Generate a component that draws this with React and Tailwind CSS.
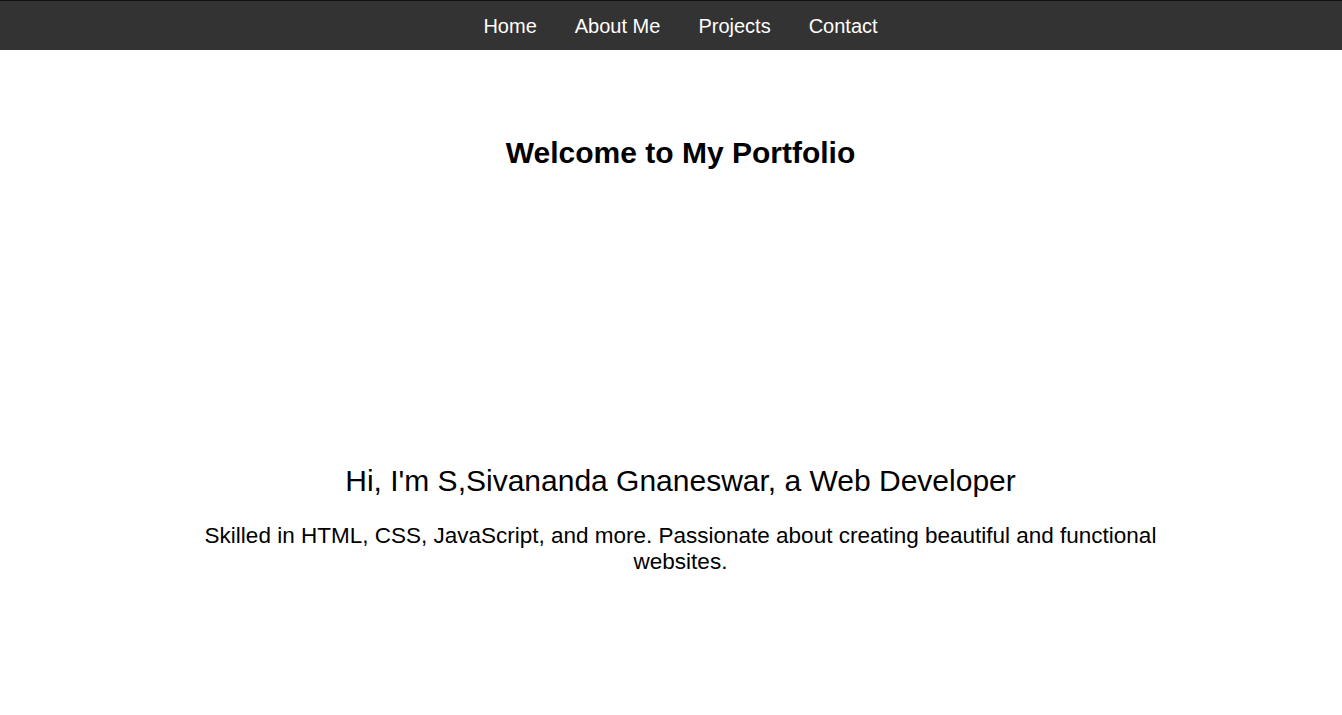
export default function App() {
  return (
    <div className="min-h-screen bg-white text-black" style={{ fontFamily: '"Liberation Sans", Arial, sans-serif' }}>
      <nav className="h-[50px] bg-[#333333] border-t border-[#111111] flex items-center justify-center">
        <ul className="flex pl-[19px]">
          {["Home", "About Me", "Projects", "Contact"].map((t) => (
            <li key={t} className="px-[19px] text-[20px] text-white">
              <a href="#">{t}</a>
            </li>
          ))}
        </ul>
      </nav>
      <header className="pt-[80px] pl-[19px] text-center">
        <h1 className="text-[30px] font-bold">Welcome to My Portfolio</h1>
      </header>
      <section className="pt-[283px] pl-[19px] flex flex-col items-center text-center">
        <h2 className="text-[30px]">Hi, I'm S,Sivananda Gnaneswar, a Web Developer</h2>
        <p className="mt-[20px] max-w-[960px] text-[22.5px] leading-[26px]">
          Skilled in HTML, CSS, JavaScript, and more. Passionate about creating beautiful and functional websites.
        </p>
      </section>
    </div>
  );
}
